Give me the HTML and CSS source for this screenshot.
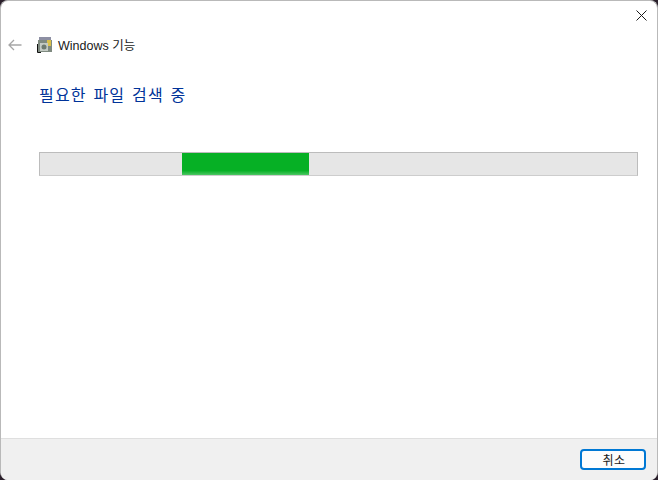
FILE: index.html
```html
<!DOCTYPE html>
<html lang="ko">
<head>
<meta charset="UTF-8" />
<title>Windows 기능</title>
<link rel="stylesheet" href="styles.css">
</head>
<body>
<div class="window">
  <div class="close-row">
    <button class="close-btn" aria-label="닫기">
      <svg width="11" height="11" viewBox="0 0 11 11"><path d="M0.5 0.5 L10.5 10.5 M10.5 0.5 L0.5 10.5" stroke="#1a1a1a" stroke-width="1" fill="none"/></svg>
    </button>
  </div>

  <div class="title-row">
    <svg class="back-icon" width="14" height="12" viewBox="0 0 14 12"><path d="M6 1 L1 6 L6 11 M1 6 H13.5" stroke="#a6a6a6" stroke-width="1.3" fill="none"/></svg>
    <svg class="app-icon" width="16" height="16" viewBox="0 0 16 16">
      <rect x="2" y="0" width="12" height="3" fill="#8d8fa3"/>
      <rect x="1" y="3" width="14" height="12" fill="#7f8a80"/>
      <rect x="10" y="3" width="4" height="6" fill="#d9c04a"/>
      <rect x="3" y="6" width="8" height="8" fill="#c4cbc4"/>
      <circle cx="7" cy="10" r="2.5" fill="#6d7a70"/>
      <path d="M0.5 7 V15.5 H4" stroke="#111" fill="none"/>
    </svg>
    <span class="app-name">Windows 기능</span>
  </div>

  <main class="content">
    <h1 class="status">필요한 파일 검색 중</h1>
    <div class="progress">
      <div class="progress-bar"></div>
    </div>
  </main>

  <footer class="footer">
    <button class="cancel-btn">취소</button>
  </footer>
</div>
</body>
</html>
```

FILE: styles.css
```css
html, body {
  margin: 0; padding: 0;
  height: 100%;
  background: #2a1f2b;
  overflow: hidden;
}

.window {
  box-sizing: border-box;
  width: 658px; height: 480px;
  display: flex; flex-direction: column;
  background: #fff;
  border: 1px solid #b9b9b9;
  border-bottom: none;
  border-radius: 8px;
  overflow: hidden;
  font-family: "Noto Sans CJK KR", "Liberation Sans", sans-serif;
}

.close-row {
  display: flex; justify-content: flex-end;
  height: 29px;
}
.close-btn {
  display: flex; align-items: center; justify-content: center;
  width: 30px; height: 28px;
  margin-right: 1px;
  padding: 0;
  border: none; background: none;
}

.title-row {
  display: flex; align-items: center;
  height: 30px;
  padding-left: 7px;
}
.back-icon {
  margin-right: 15px;
}
.app-icon {
  margin-right: 5px;
}
.app-name {
  font-family: "Liberation Sans", "Noto Sans CJK KR", sans-serif;
  font-size: 12.5px;
  line-height: 14px;
  margin-top: 2px;
  color: #1a1a1a;
}

.content {
  flex: 1;
  padding: 0 19px 0 38px;
}
.status {
  margin: 23px 0 0;
  font-size: 16px; font-weight: 400; line-height: 22px;
  letter-spacing: 1.2px;
  word-spacing: 1px;
  color: #003399;
}
.progress {
  box-sizing: border-box;
  height: 24px;
  margin-top: 47px;
  background: #e6e6e6;
  border: 1px solid #bcbcbc;
  border-bottom-color: #cdcdcd;
}
.progress-bar {
  width: 127px; height: 100%;
  margin-left: 142px;
  background: linear-gradient(to bottom, #06b025 0, #06b025 80%, #4cc763 100%);
}

.footer {
  display: flex; justify-content: flex-end; align-items: center;
  box-sizing: border-box;
  height: 42px;
  padding-right: 11px;
  background: #f0f0f0;
  border-top: 1px solid #dfdfdf;
}
.cancel-btn {
  box-sizing: border-box;
  width: 66px; height: 21px;
  padding: 0 0 0 2px;
  background: #fdfdfd;
  border: 2px solid #0078d4;
  border-radius: 4px;
  font-family: "Noto Sans CJK KR", sans-serif;
  font-size: 12px; line-height: 15px;
  letter-spacing: 0.5px;
  color: #1a1a1a;
}
```
